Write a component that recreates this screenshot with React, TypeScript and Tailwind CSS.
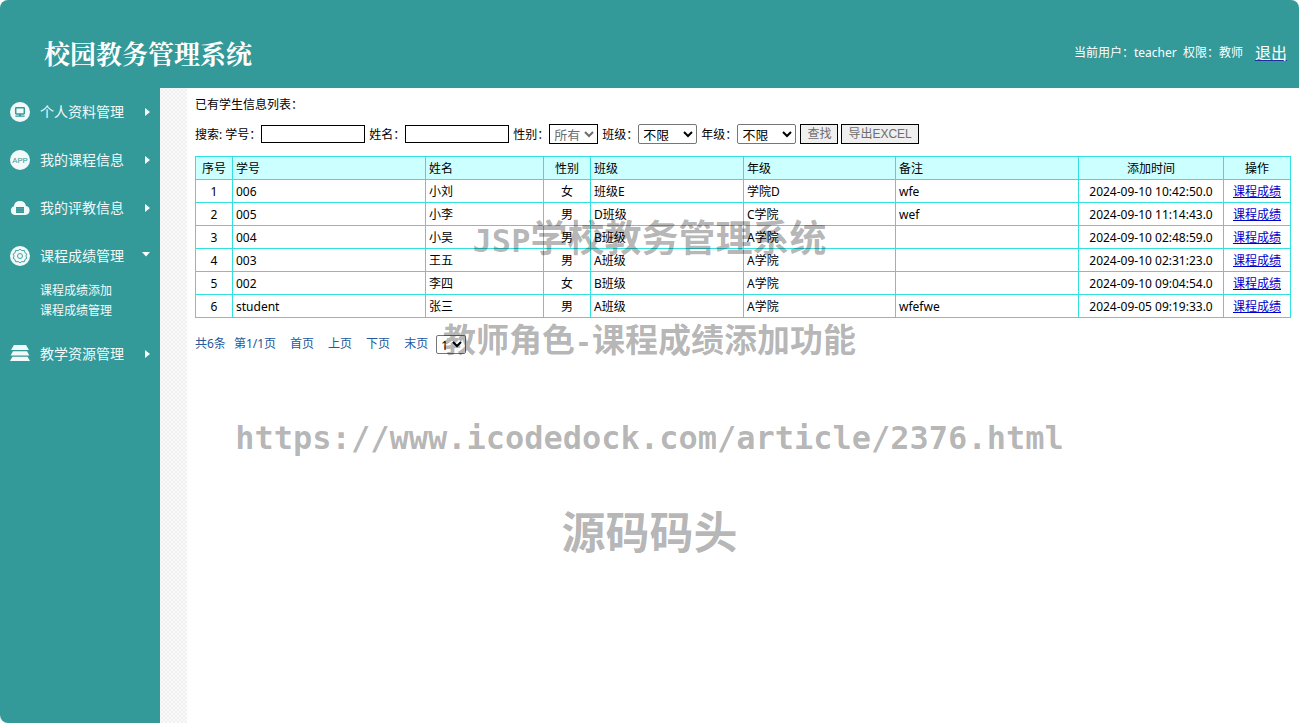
import type { ReactNode } from 'react'

const ComputerIcon = () => (
  <svg viewBox="0 0 20 20" className="size-5">
    <circle cx="10" cy="10" r="10" fill="#f1f9f9" />
    <rect x="5.7" y="5.7" width="8.6" height="6.2" rx="0.6" fill="none" stroke="#359a99" strokeWidth="1.5" />
    <path d="M9 12h2v1.4h3.6v1.4H5.4v-1.4H9z" fill="#359a99" />
  </svg>
)

const AppIcon = () => (
  <svg viewBox="0 0 20 20" className="size-5">
    <circle cx="10" cy="10" r="10" fill="#f1f9f9" />
    <text
      x="10"
      y="13"
      textAnchor="middle"
      fontFamily="Roboto, sans-serif"
      fontSize="8"
      fill="#359a99"
    >
      APP
    </text>
  </svg>
)

const CloudIcon = () => (
  <svg viewBox="0 0 20 20" className="size-5">
    <path
      d="M4.6 17A4.6 4.6 0 0 1 3.8 8.2 6.2 6.2 0 0 1 16 8.1 4.5 4.5 0 0 1 15.4 17z"
      fill="#f1f9f9"
    />
    <rect x="6" y="9" width="8" height="6" fill="#4ba5a4" />
    <path d="M6 9.5h8M6 12h8M6 14.5h8" stroke="#2f8f8e" strokeWidth="0.7" />
  </svg>
)

const GearIcon = () => (
  <svg viewBox="0 0 20 20" className="size-5">
    <circle cx="10" cy="10" r="10" fill="#f1f9f9" />
    <path
      d="M10 3.2l1.8 1.4 2.6-.2.6 2.5 1.9 1.3-1 1.8 1 2.3-1.9 1.1-.6 2.3-2.6-.1L10 16.8l-1.8-1.2-2.6.1-.6-2.3-1.9-1.1 1-2.3-1-1.8L5 6.9l.6-2.5 2.6.2z"
      fill="none"
      stroke="#359a99"
      strokeWidth="0.9"
      strokeLinejoin="round"
    />
    <circle cx="10" cy="10" r="2.5" fill="none" stroke="#359a99" strokeWidth="0.9" />
  </svg>
)

const StackIcon = () => (
  <svg viewBox="0 0 20 20" className="size-5">
    <path d="M4 1h12l3 5H1z" fill="#f1f9f9" />
    <path d="M3 7.2h14l2.4 4.3H.6zM2.4 12.8h15.2L20 17H0z" fill="#f1f9f9" />
  </svg>
)

type MenuItem = { icon: () => ReactNode; label: string; children?: string[] }

const menu: MenuItem[] = [
  { icon: ComputerIcon, label: '个人资料管理' },
  { icon: AppIcon, label: '我的课程信息' },
  { icon: CloudIcon, label: '我的评教信息' },
  { icon: GearIcon, label: '课程成绩管理', children: ['课程成绩添加', '课程成绩管理'] },
  { icon: StackIcon, label: '教学资源管理' },
]

const students = [
  { no: '006', name: '小刘', sex: '女', cls: '班级E', grade: '学院D', note: 'wfe', time: '2024-09-10 10:42:50.0' },
  { no: '005', name: '小李', sex: '男', cls: 'D班级', grade: 'C学院', note: 'wef', time: '2024-09-10 11:14:43.0' },
  { no: '004', name: '小吴', sex: '男', cls: 'B班级', grade: 'A学院', note: '', time: '2024-09-10 02:48:59.0' },
  { no: '003', name: '王五', sex: '男', cls: 'A班级', grade: 'A学院', note: '', time: '2024-09-10 02:31:23.0' },
  { no: '002', name: '李四', sex: '女', cls: 'B班级', grade: 'A学院', note: '', time: '2024-09-10 09:04:54.0' },
  { no: 'student', name: '张三', sex: '男', cls: 'A班级', grade: 'A学院', note: 'wfefwe', time: '2024-09-05 09:19:33.0' },
]

const columns = [
  { title: '序号', style: 'w-[37px] text-center' },
  { title: '学号', style: 'w-[193px] text-left' },
  { title: '姓名', style: 'w-[118px] text-left' },
  { title: '性别', style: 'w-[47px] text-center' },
  { title: '班级', style: 'w-[153px] text-left' },
  { title: '年级', style: 'w-[152px] text-left' },
  { title: '备注', style: 'w-[183px] text-left' },
  { title: '添加时间', style: 'w-[145px] text-center' },
  { title: '操作', style: 'w-[67px] text-center' },
]

const cell = 'h-[23px] border border-[#33e0e0] px-[3px] pt-[2px] leading-4 font-normal'
const textBox = 'h-[18px] w-[104px] border border-black px-1'
const dropDown = 'h-5 w-[59px] rounded-xs border border-[#767676] bg-white pb-[2px] text-[13px]'
const formButton =
  "h-5 border border-black bg-[#efefef] px-1.5 font-['Liberation_Sans','Noto_Sans_CJK_SC',sans-serif] leading-4 text-[#6d6d6d]"

function Sidebar() {
  return (
    <nav className="w-40 shrink-0 bg-[#339999] text-[#f1f9f9]">
      {menu.map((item) => (
        <div key={item.label}>
          <button type="button" className="flex h-12 w-full items-center px-2.5 text-sm">
            <item.icon />
            <span className="ml-2.5 grow text-left">{item.label}</span>
            {item.children ? (
              <svg viewBox="0 0 8 8" className="size-2">
                <path d="M0 0h8L4 4.5z" fill="#fff" />
              </svg>
            ) : (
              <svg viewBox="0 0 8 8" className="size-2">
                <path d="M3 0l5 4-5 4z" fill="#fff" />
              </svg>
            )}
          </button>
          {item.children && (
            <ul className="pt-px pb-[9px] pl-10 text-xs leading-5">
              {item.children.map((child) => (
                <li key={child}>
                  <a href="#">{child}</a>
                </li>
              ))}
            </ul>
          )}
        </div>
      ))}
    </nav>
  )
}

function Field({ id, label, children }: { id: string; label: string; children: ReactNode }) {
  return (
    <div className="flex items-center">
      <label htmlFor={id} className="pt-px">
        {label}：
      </label>
      {children}
    </div>
  )
}

function SearchForm() {
  return (
    <form className="flex h-5 items-center gap-1">
      <div className="flex items-center gap-[3px]">
        <span className="pt-px">搜索:</span>
        <Field id="no" label="学号">
          <input id="no" className={textBox} />
        </Field>
      </div>
      <Field id="name" label="姓名">
        <input id="name" className={textBox} />
      </Field>
      <Field id="sex" label="性别">
        <select id="sex" className="h-5 w-[49px] border border-black bg-white pb-[2px] text-[13px] text-[#6d6d6d]">
          <option>所有</option>
        </select>
      </Field>
      <Field id="cls" label="班级">
        <select id="cls" className={dropDown}>
          <option>不限</option>
        </select>
      </Field>
      <Field id="grade" label="年级">
        <select id="grade" className={dropDown}>
          <option>不限</option>
        </select>
      </Field>
      <div className="flex gap-[3px]">
        <button type="button" className={formButton}>
          查找
        </button>
        <button type="button" className={formButton}>
          导出EXCEL
        </button>
      </div>
    </form>
  )
}

function StudentTable() {
  return (
    <table className="mt-3 w-full table-fixed border-collapse">
      <thead>
        <tr className="bg-[#ccffff]">
          {columns.map((col) => (
            <th key={col.title} className={`${cell} ${col.style}`}>
              {col.title}
            </th>
          ))}
        </tr>
      </thead>
      <tbody>
        {students.map((s, i) => (
          <tr key={s.no}>
            <td className={`${cell} text-center`}>{i + 1}</td>
            <td className={cell}>{s.no}</td>
            <td className={cell}>{s.name}</td>
            <td className={`${cell} text-center`}>{s.sex}</td>
            <td className={cell}>{s.cls}</td>
            <td className={cell}>{s.grade}</td>
            <td className={cell}>{s.note}</td>
            <td className={`${cell} text-center whitespace-nowrap`}>{s.time}</td>
            <td className={`${cell} text-center`}>
              <a href="#" className="text-[#0000cc] underline">
                课程成绩
              </a>
            </td>
          </tr>
        ))}
      </tbody>
    </table>
  )
}

function Pager() {
  return (
    <div className="mt-4 flex h-5 items-center text-[#22589c]">
      <span className="mr-2">共6条</span>
      <span className="mr-3.5">第1/1页</span>
      <a href="#" className="mr-3.5">首页</a>
      <a href="#" className="mr-3.5">上页</a>
      <a href="#" className="mr-3.5">下页</a>
      <a href="#" className="mr-2">末页</a>
      <select
        aria-label="页码"
        className="h-[19px] w-[30px] rounded-xs border border-[#767676] bg-white pb-[2px] text-black"
      >
        <option>1</option>
      </select>
    </div>
  )
}

function Watermark() {
  return (
    <div className="pointer-events-none absolute inset-x-0 top-[214px] flex flex-col items-center font-bold whitespace-nowrap text-black/30">
      <p className="h-12 text-[37px] leading-12">
        <span className="font-['DejaVu_Sans_Mono'] text-[32px]">JSP</span>学校教务管理系统
      </p>
      <p className="mt-[54px] h-12 text-[33px] leading-12">
        教师角色<span className="font-['DejaVu_Sans_Mono'] text-[28px]">-</span>课程成绩添加功能
      </p>
      <p className="mt-[50px] h-12 font-['DejaVu_Sans_Mono'] text-[32px] leading-12">
        https://www.icodedock.com/article/2376.html
      </p>
      <p className="mt-[46px] h-12 text-[44px] leading-12">源码码头</p>
    </div>
  )
}

export default function App() {
  return (
    <div className="relative flex min-h-screen flex-col overflow-hidden rounded-lg bg-white font-['Noto_Sans','Noto_Sans_CJK_SC',sans-serif] text-xs text-black">
      <header className="flex h-[88px] items-center justify-between bg-[#339999] pt-[18px] pr-3 pl-11 text-white">
        <h1 className="font-['Noto_Serif_CJK_SC','Noto_Sans_CJK_SC',serif] text-[26px] font-bold">校园教务管理系统</h1>
        <div className="flex items-center gap-3">
          <span>当前用户：teacher&nbsp; 权限：教师</span>
          <a href="#" className="text-base underline decoration-[#1c2f9c]">
            退出
          </a>
        </div>
      </header>

      <div className="flex grow">
        <Sidebar />
        <div className="w-[27px] shrink-0 bg-[#f9f9f9] bg-[radial-gradient(#f1f1f1_1px,transparent_1px),radial-gradient(#f1f1f1_1px,transparent_1px)] bg-size-[4px_4px] bg-position-[0_0,2px_2px]" />
        <main className="min-w-0 grow px-2 pt-[9px]">
          <p className="mb-[11px] leading-4">已有学生信息列表：</p>
          <SearchForm />
          <StudentTable />
          <Pager />
        </main>
      </div>

      <Watermark />
    </div>
  )
}
